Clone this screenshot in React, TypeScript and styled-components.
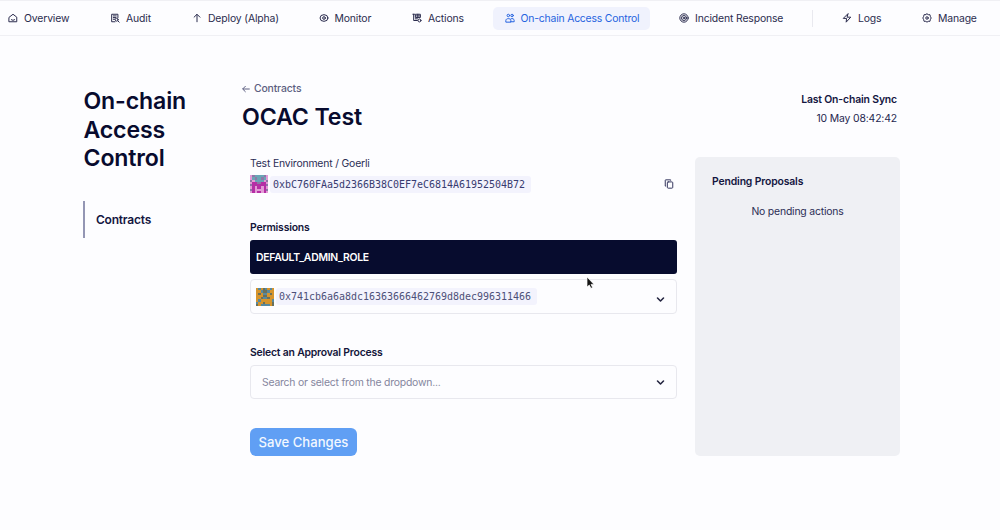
import React from "react";
import styled, { createGlobalStyle } from "styled-components";

const Global = createGlobalStyle`
  * { box-sizing: border-box; }
  body { margin: 0; background: #fdfdff; font-family: Inter, sans-serif; letter-spacing: -0.14px; color: #1b1d48; }
`;

const Page = styled.div`
  width: 1000px;
  height: 530px;
  overflow: hidden;
  position: relative;
  background: #fdfdff;
`;

const Nav = styled.nav`
  height: 36px;
  padding-left: 8px;
  border-top: 1px solid #f0f0f4;
  border-bottom: 1px solid #f0f0f4;
  display: flex;
  align-items: center;
`;

const NavItem = styled.a<{ $width: number; $active?: boolean }>`
  flex: none;
  display: flex;
  align-items: center;
  gap: 6px;
  height: 23px;
  width: ${(p) => p.$width + (p.$active ? 24 : 0)}px;
  padding: 0 ${(p) => (p.$active ? 12 : 0)}px;
  margin: 0 ${(p) => (p.$active ? 29 : 41)}px 0 ${(p) => (p.$active ? -12 : 0)}px;
  border-radius: 5px;
  background: ${(p) => (p.$active ? "#f0f2fd" : "transparent")};
  color: ${(p) => (p.$active ? "#2563e0" : "#2b2c4e")};
  font-size: 10.4px;
  letter-spacing: ${(p) => (p.$active ? -0.19 : -0.14)}px;
  white-space: nowrap;
`;

const NavDivider = styled.span`
  flex: none;
  width: 1px;
  height: 17px;
  margin: 0 29px 0 -12px;
  background: #e9e9ef;
`;

const Glyph = styled.svg`
  flex: none;
  display: block;
  fill: none;
  stroke: currentColor;
  stroke-linecap: round;
  stroke-linejoin: round;
`;

const Body = styled.div`
  display: grid;
  grid-template-columns: 158px 435px 223px;
  padding: 46px 0 0 84px;
`;

const Sidebar = styled.aside`
  padding-top: 5px;
`;

const SectionTitle = styled.h1`
  margin: 0 0 0 -0.5px;
  width: 130px;
  font-size: 23.1px;
  line-height: 28.5px;
  font-weight: 600;
  color: #080b2e;
`;

const SideLink = styled.a`
  display: flex;
  align-items: center;
  width: 120px;
  height: 37px;
  margin: 28px 0 0 -1px;
  padding-left: 11px;
  border-left: 2px solid #9496b4;
  font-size: 12px;
  letter-spacing: -0.22px;
  font-weight: 600;
  color: #14163f;
`;

const Main = styled.main`
  display: flex;
  flex-direction: column;
`;

const Back = styled.a`
  display: flex;
  align-items: center;
  gap: 4px;
  height: 13px;
  font-size: 10.4px;
  font-weight: 500;
  color: #5c5e80;
`;

const Title = styled.h2`
  margin: 7px 0 0;
  font-size: 23.2px;
  line-height: 30px;
  font-weight: 600;
  color: #080b2e;
`;

const Form = styled.div`
  display: flex;
  flex-direction: column;
  padding: 24px 0 0 8px;
`;

const Network = styled.div`
  height: 15px;
  font-size: 10.4px;
  line-height: 16px;
  letter-spacing: -0.17px;
  color: #2b2d55;
`;

const AddressLine = styled.div`
  display: flex;
  align-items: center;
  height: 18px;
  margin-top: 4px;
`;

const Address = styled.code<{ $color: string }>`
  height: 17px;
  margin-left: 2px;
  padding: 0 6px 0 3px;
  border-radius: 3px;
  background: #f3f3fd;
  font: 9.97px/17px "DejaVu Sans Mono", monospace;
  letter-spacing: 0;
  color: ${(p) => p.$color};
`;

const CopyButton = styled.span`
  display: flex;
  margin-left: auto;
  margin-right: 3px;
  color: #34365e;
`;

const Label = styled.div<{ $top: number }>`
  margin-top: ${(p) => p.$top}px;
  height: 14px;
  font-size: 10.4px;
  line-height: 14px;
  font-weight: 600;
  letter-spacing: -0.19px;
  color: #14163a;
`;

const RoleBar = styled.div`
  display: flex;
  align-items: center;
  height: 34px;
  margin-top: 5px;
  padding-left: 6px;
  border-radius: 3px;
  background: #070c2e;
  color: #fff;
  font-size: 10.4px;
  letter-spacing: -0.27px;
  font-weight: 600;
`;

const Field = styled.div<{ $top: number; $left: number }>`
  display: flex;
  align-items: center;
  height: ${(p) => (p.$left > 6 ? 34 : 35)}px;
  margin-top: ${(p) => p.$top}px;
  padding: 0 11px 0 ${(p) => p.$left}px;
  border: 1px solid #e8e8ee;
  border-radius: 4px;
`;

const Placeholder = styled.span`
  font-size: 10.4px;
  letter-spacing: -0.2px;
  color: #85869e;
`;

const Chevron = styled.span<{ $drop: number }>`
  display: flex;
  margin-left: auto;
  padding-top: ${(p) => p.$drop}px;
  color: #23243f;
`;

const SaveButton = styled.button`
  width: 107px;
  height: 28px;
  margin-top: 29px;
  padding: 0;
  border: 0;
  border-radius: 6px;
  background: #609ff4;
  color: #f3f8ff;
  font: 500 13.1px/26px Inter, sans-serif;
  white-space: nowrap;
`;

const Aside = styled.aside`
  padding: 9px 0 0 18px;
`;

const Sync = styled.div`
  width: 202px;
  text-align: right;
  font-size: 10.4px;
  line-height: 18.5px;
  height: 66px;
  color: #25274f;
`;

const SyncTitle = styled.div`
  font-weight: 600;
  color: #14163f;
`;

const Panel = styled.section`
  width: 205px;
  height: 299px;
  padding: 17px 17px 0;
  border-radius: 5px;
  background: #eff0f4;
  font-size: 10.4px;
  line-height: 15px;
`;

const PanelTitle = styled.div`
  font-weight: 600;
  color: #14163f;
`;

const PanelEmpty = styled.div`
  margin-top: 15px;
  text-align: center;
  letter-spacing: -0.18px;
  color: #2b2d55;
`;

const Cursor = styled.svg`
  position: absolute;
  left: 586px;
  top: 276px;
`;

const icons: Record<string, React.ReactNode> = {
  home: <><path d="M3 10 12 3l9 7v11H3z" /><path d="M8 16c2 2 6 2 8 0" /></>,
  audit: <><path d="M19 11V3H4v18h8M8 7h7M8 11h6M8 15h3" /><circle cx="16" cy="16" r="3.5" /><path d="m19 19 3 3" /></>,
  up: <path d="M12 21V4M5 10l7-7 7 7" />,
  eye: <><ellipse cx="12" cy="12" rx="9.5" ry="8" /><circle cx="12" cy="12" r="3.2" /></>,
  actions: <><path d="M2 3h4M4 3v15h9M9 3h11v8H9zM9 7h11M14 3v8" /><circle cx="18" cy="18" r="3.5" /><path d="M8 14h5" /></>,
  users: <><circle cx="8" cy="6" r="3" /><circle cx="17" cy="6" r="3" /><path d="M2 21v-3c0-6 12-6 12 0v3zM14 14c4-2 8 0 8 4v3h-8" /></>,
  target: <><circle cx="12" cy="12" r="10" /><circle cx="12" cy="12" r="6" /><circle cx="12" cy="12" r="2" /></>,
  bolt: <path d="M14 2 3 13h8l-1 9 11-12h-8z" />,
  gear: <><path d="m12 2 3 2h4l1 4 2 4-2 4-1 4h-4l-3 2-3-2H5l-1-4-2-4 2-4 1-4h4z" /><circle cx="12" cy="12" r="3" /></>,
  back: <path d="M22 12H3M10 4l-8 8 8 8" />,
  copy: <><rect x="8" y="7" width="13" height="15" rx="2" /><path d="M4 17H3V3q0-1 1-1h12v1" /></>,
  chevron: <path d="m4 8 8 8 8-8" />,
};

function Icon({ name, size = 10, weight = 2.4 }: { name: string; size?: number; weight?: number }) {
  return (
    <Glyph width={size} height={size} viewBox="0 0 24 24" strokeWidth={weight}>
      {icons[name]}
    </Glyph>
  );
}

const pinkRows = ["pgttttgp", "ptgttgtp", "gpttttpg", "pmmggmmp", "gmmmmmmg", "pmpmmpmp", "gmppppmg", "pmpmmpmp"];
const goldRows = ["obogbobo", "oobggboo", "ogobbogo", "oooggooo", "oogbbgoo", "obooooob", "boogooog", "gobbbbog"];
const tones: Record<string, string> = {
  p: "#e39bd6", t: "#6aa5b5", g: "#8d78a8", m: "#b52fa5", o: "#d6942c", b: "#5689a0", G: "#69715c",
};

function Avatar({ rows, gold }: { rows: string[]; gold?: boolean }) {
  return (
    <Glyph width="18" height="18" viewBox="0 0 8 8" strokeWidth="0" shapeRendering="crispEdges">
      {rows.flatMap((row, y) =>
        [...row].map((c, x) => (
          <rect key={`${x}-${y}`} x={x} y={y} width="1" height="1" fill={tones[gold && c === "g" ? "G" : c]} />
        ))
      )}
    </Glyph>
  );
}

const links = [
  { icon: "home", text: "Overview", width: 61 },
  { icon: "audit", text: "Audit", width: 41 },
  { icon: "up", text: "Deploy (Alpha)", width: 85.5 },
  { icon: "eye", text: "Monitor", width: 52.5 },
  { icon: "actions", text: "Actions", width: 51.5 },
  { icon: "users", text: "On-chain Access Control", width: 133.5, active: true },
  { icon: "target", text: "Incident Response", width: 104 },
];

export default function App() {
  return (
    <Page>
      <Global />
      <Nav>
        {links.map((l) => (
          <NavItem key={l.text} $width={l.width} $active={l.active}>
            <Icon name={l.icon} />
            {l.text}
          </NavItem>
        ))}
        <NavDivider />
        <NavItem $width={39}><Icon name="bolt" />Logs</NavItem>
        <NavItem $width={54}><Icon name="gear" />Manage</NavItem>
      </Nav>
      <Body>
        <Sidebar>
          <SectionTitle>On-chain Access Control</SectionTitle>
          <SideLink>Contracts</SideLink>
        </Sidebar>
        <Main>
          <Back><Icon name="back" size={8} weight={3} />Contracts</Back>
          <Title>OCAC Test</Title>
          <Form>
            <Network>Test Environment / Goerli</Network>
            <AddressLine>
              <Avatar rows={pinkRows} />
              <Address $color="#383b70">0xbC760FAa5d2366B38C0EF7eC6814A61952504B72</Address>
              <CopyButton><Icon name="copy" /></CopyButton>
            </AddressLine>
            <Label $top={28}>Permissions</Label>
            <RoleBar>DEFAULT_ADMIN_ROLE</RoleBar>
            <Field $top={5} $left={5}>
              <Avatar rows={goldRows} gold />
              <Address $color="#4d4f78">0x741cb6a6a8dc16363666462769d8dec996311466</Address>
              <Chevron $drop={5}><Icon name="chevron" size={9} weight={4.2} /></Chevron>
            </Field>
            <Label $top={32}>Select an Approval Process</Label>
            <Field $top={5} $left={11}>
              <Placeholder>Search or select from the dropdown...</Placeholder>
              <Chevron $drop={0}><Icon name="chevron" size={9} weight={4.2} /></Chevron>
            </Field>
            <SaveButton>Save Changes</SaveButton>
          </Form>
        </Main>
        <Aside>
          <Sync>
            <SyncTitle>Last On-chain Sync</SyncTitle>
            10 May 08:42:42
          </Sync>
          <Panel>
            <PanelTitle>Pending Proposals</PanelTitle>
            <PanelEmpty>No pending actions</PanelEmpty>
          </Panel>
        </Aside>
      </Body>
      <Cursor width="9" height="13" viewBox="0 0 9 13">
        <path d="M1 1v10l2.3-2 1.6 3.3 1.7-.8L5 8.4h3z" fill="#151515" stroke="#fff" strokeWidth=".7" />
      </Cursor>
    </Page>
  );
}
